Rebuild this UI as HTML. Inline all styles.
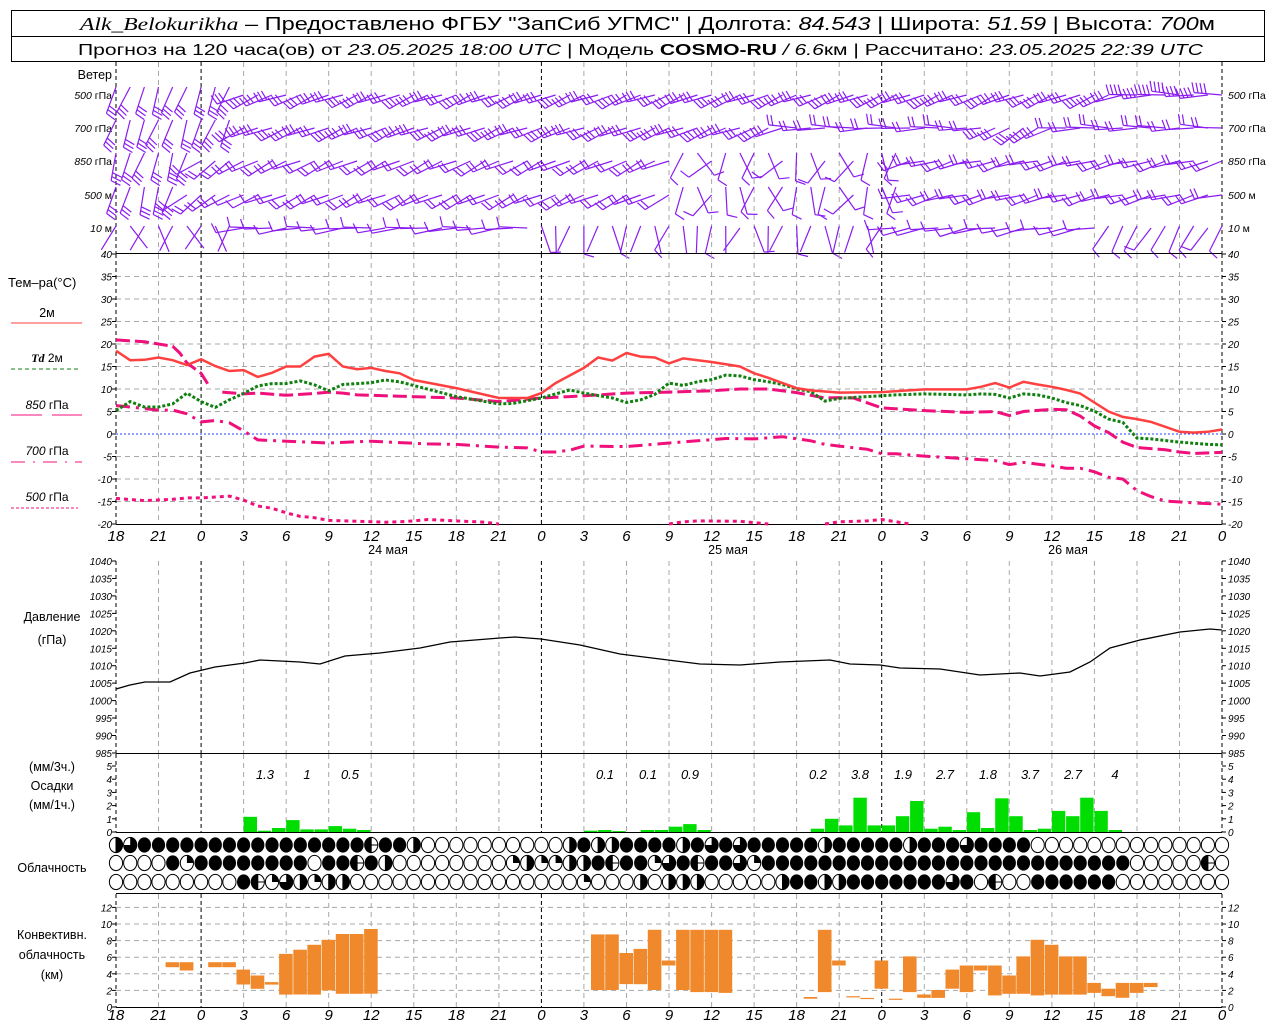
<!DOCTYPE html>
<html><head><meta charset="utf-8">
<style>
html,body{margin:0;padding:0;background:#fff;width:1280px;height:1024px;overflow:hidden}
svg{display:block}
text{font-family:"Liberation Sans",sans-serif;fill:#000}
.it{font-style:italic}
.sr{font-family:"Liberation Serif",serif;font-style:italic}
.ax{font-size:10px;font-style:italic}
.hr{font-size:15px;font-style:italic}
.lb{font-size:12.5px}
</style></head><body>
<svg id="s" width="1280" height="1024" xmlns="http://www.w3.org/2000/svg">
<rect x="11.5" y="10.5" width="1253" height="51" fill="none" stroke="#000"/>
<line x1="11" y1="36.5" x2="1265" y2="36.5" stroke="#000"/>
<text x="80" y="30" font-size="18" textLength="1135" lengthAdjust="spacingAndGlyphs"><tspan class="sr">Alk_Belokurikha</tspan> – Предоставлено ФГБУ "ЗапСиб УГМС" | Долгота: <tspan class="it">84.543</tspan> | Широта: <tspan class="it">51.59</tspan> | Высота: <tspan class="it">700</tspan>м</text>
<text x="78" y="55" font-size="16" textLength="1125" lengthAdjust="spacingAndGlyphs">Прогноз на 120 часа(ов) от <tspan class="it">23.05.2025 18:00 UTC</tspan>  | Модель <tspan font-weight="bold">COSMO-RU</tspan><tspan class="it"> / 6.6</tspan>км | Рассчитано: <tspan class="it">23.05.2025 22:39 UTC</tspan></text>
<g id="g"></g>
</svg>
<script>
var NS="http://www.w3.org/2000/svg",G=document.getElementById("g"),out="";
function X(h){return 116+h*14.18}
function add(s){out+=s}
function line(x1,y1,x2,y2,st){add('<line x1="'+x1.toFixed(1)+'" y1="'+y1.toFixed(1)+'" x2="'+x2.toFixed(1)+'" y2="'+y2.toFixed(1)+'" '+st+'/>')}
function txt(x,y,t,cls,anc){add('<text x="'+x+'" y="'+y+'" class="'+(cls||'')+'" text-anchor="'+(anc||'start')+'">'+t+'</text>')}
var GRAY='stroke="#a8a8a8" stroke-width="1" stroke-dasharray="5,4"';
var BLK='stroke="#000" stroke-width="1" stroke-dasharray="4,3"';
function vgrid(y1,y2){for(var h=0;h<=78;h+=3){var day=(h%24==6)||h==0||h==78;line(X(h),y1,X(h),y2,day?BLK:GRAY)}}
// panels
// wind
vgrid(62,253);
txt(112,79,"Ветер","lb","end");
var wl=["500 гПа","700 гПа","850 гПа","500  м","10   м"],wy=[95,128,161,195,228];
for(var i=0;i<5;i++){add('<text x="112" y="'+(wy[i]+4)+'" font-size="10.5" text-anchor="end"><tspan class="it">'+wl[i].split(" ")[0]+'</tspan> '+wl[i].split(" ").slice(1).join(" ").trim()+'</text>');
add('<text x="1228" y="'+(wy[i]+4)+'" font-size="10.5"><tspan class="it">'+wl[i].split(" ")[0]+'</tspan> '+wl[i].split(" ").slice(1).join(" ").trim()+'</text>');}
// barbs
function wind(r,h){var a,n;var j=Math.sin(h*1.7+r*2.3)*8;
 if(r==0){if(h<9){a=110;n=3}else if(h<72){a=158;n=3}else{a=180;n=4}}
 else if(r==1){if(h<9){a=110;n=3}else if(h<48){a=158;n=3}else if(h>=62&&h<67){a=150;n=3}else{a=180;n=2}}
 else if(r==2){if(h<6){a=108;n=3}else if(h<10){a=145;n=2}else if(h<40){a=155;n=2}else if(h<56){a=[120,60,140,100,70][h%5];n=1}else{a=165;n=2}}
 else if(r==3){if(h<5){a=105;n=3}else if(h<9){a=145;n=2}else if(h<12){a=160;n=1}else if(h<40){a=155;n=2}else if(h<56){a=[110,60,130,95,75][h%5];n=1}else{a=165;n=2}}
 else{if(h<9){a=(h%2?60:120);n=0}else if(h<30){a=175;n=1}else if(h<55){a=[75,95,110,85,120][h%5];n=(h%3==0)?1:0}else if(h<70){a=170;n=1}else{a=120;n=1}}
 return [a+j,n]}
var wc='stroke="#8a1cf0" stroke-width="1.2"';
for(var r=0;r<5;r++){for(var h=0;h<=78;h++){var w=wind(r,h),a=w[0]*Math.PI/180,n=w[1];
 var ux=Math.cos(a),uy=Math.sin(a);var sx=X(h),sy=wy[r]+(w[0]<=125?-8:0);
 if(r==4&&w[0]<=125){sy=wy[r]-2}
 var L=28,tx=sx+ux*L,ty=sy+uy*L;line(sx,sy,tx,ty,wc);
 var px,py;if(w[0]<=125){px=Math.sin(a);py=-Math.cos(a)}else{px=-Math.sin(a);py=Math.cos(a)}
 for(var k=0;k<n;k++){var bx=tx-ux*k*4,by=ty-uy*k*4;line(bx,by,bx+px*10+ux*3,by+py*10+uy*3,wc)}}}
// temp panel
line(116,253.5,1222,253.5,'stroke="#000"');line(116,524.5,1222,524.5,'stroke="#000"');
function TY(t){return 434-t*4.5}
for(var t=35;t>=-15;t-=5){if(t!=0)line(116,TY(t),1222,TY(t),GRAY)}
vgrid(254,524);
line(116,434,1222,434,'stroke="#2040ff" stroke-width="1" stroke-dasharray="2,2"');
for(var t=40;t>=-20;t-=5){txt(112,TY(t)+4,t,"ax","end");txt(1228,TY(t)+4,t,"ax");line(112,TY(t),116,TY(t),'stroke="#000"');line(1222,TY(t),1226,TY(t),'stroke="#000"')}
function poly(pts,st,fy){var s=pts.map(function(p){return X(p[0]).toFixed(1)+","+fy(p[1]).toFixed(1)}).join(" ");add('<polyline fill="none" points="'+s+'" '+st+'/>')}
var red=[[0,18.5],[1,16.4],[2,16.5],[3,17],[4,16.4],[5,15.3],[6,16.6],[7,15.1],[8,14],[9,14.2],[10,12.7],[11,13.6],[12,15],[13,15],[14,17.2],[15,17.8],[16,15],[17,14.4],[18,14.7],[19,14],[20,13.5],[21,12],[24,10.2],[27,8],[29,8],[30,9.1],[31,11.3],[33,14.7],[34,17],[35,16.3],[36,18],[37,17.2],[38,17],[39,15.7],[40,16.8],[42,16],[44,15],[45,13.5],[46,12.5],[47,11.3],[48,10.2],[49,9.7],[51,9.2],[54,9.3],[57,9.9],[60,9.9],[61,10.5],[62,11.3],[63,10.3],[64,11.6],[65,11],[66,10.5],[67,9.8],[68,9],[69,7],[70,5],[71,3.8],[72,3.3],[73,2.7],[74,1.6],[75,0.5],[76,0.3],[77,0.5],[78,1]];
var grn=[[0,5.2],[1,7.2],[2,6],[3,6],[4,6.7],[5,9.1],[6,7.2],[7,5.9],[8,7.6],[9,9],[10,10.7],[11,11.2],[12,11.2],[13,11.8],[14,10.9],[15,9.6],[16,11],[17,11.2],[18,11.4],[19,12],[20,11.6],[24,8.3],[27,6.7],[28,6.8],[30,8],[32,9.8],[33,9.1],[35,8],[36,7],[37,7.6],[38,8.8],[39,11.3],[40,10.8],[41,11.6],[42,12.1],[43,13.1],[44,12.9],[45,12.1],[46,11.6],[47,11],[48,10],[49,9.4],[50,7.3],[51,7.9],[53,8.3],[55,8.7],[57,8.9],[60,8.7],[61,8.9],[62,8.8],[63,8],[64,8.9],[65,8.7],[66,8],[67,7],[68,6.3],[69,5.1],[70,3.3],[71,2.6],[72,-0.9],[73,-1.1],[75,-1.8],[77,-2.3],[78,-2.4]];
var p850a=[[0,20.9],[2,20.5],[3,20],[4,19.5],[4.5,18],[5,15.8],[6,13.5],[6.6,10.5]];
var p850b=[[7.5,9.3],[9,8.9],[10,9.1],[12,8.6],[14,9],[15,9.3],[16,9.1],[17,8.7],[20,8.4],[24,8],[27,7.2],[30,8],[32,8.3],[34,8.7],[36,9.1],[39,9.3],[42,9.6],[44,10],[46,10],[48,9.2],[49,8.6],[50,8],[51,8.1],[52,8],[54,5.8],[57,5.2],[60,4.8],[62,5],[63,4.1],[64,5],[66,5.5],[67,5.4],[68,4],[69,1.8],[70,0.3],[71,-1.8],[72,-3],[74,-3.5],[75,-4],[76,-4.3],[78,-4.1]];
var p700=[[0,6.3],[1,6],[3,5.3],[4,5.3],[5,4.5],[6,2.7],[7,3],[8,2.5],[9,0.7],[10,-1.3],[12,-1.6],[15,-2],[18,-1.6],[20,-1.9],[22,-2.2],[24,-2.3],[27,-2.9],[29,-3.1],[30,-4],[31,-4],[32,-3.6],[33,-2.7],[36,-2.8],[39,-2],[41,-1.5],[43,-1],[45,-1.1],[47,-0.6],[49,-1.5],[50,-2.3],[51,-2.7],[53,-3.4],[54,-4.4],[55,-4.4],[57,-4.9],[60,-5.5],[62,-5.9],[63,-6.8],[64,-6.3],[66,-7.1],[67,-7.6],[68,-7.6],[69,-8.4],[70,-9.6],[71,-10],[72,-12.6],[73,-13.9],[74,-14.9],[76,-15.3],[78,-15.6]];
var p500=[[[0,-14.3],[2,-14.8],[4,-14.5],[5,-14.2],[6,-14.2],[8,-13.8],[9,-14.7],[10,-16],[11,-16.5],[12,-17.5],[13,-18.3],[14,-18.6],[15,-19.2],[17,-19.4],[19,-19.6],[20,-19.5],[21,-19.3],[22,-19],[24,-19.3],[26,-19.6],[27,-20]],[[39,-20],[40,-19.5],[41,-19.3],[44,-19.4],[46,-20]],[[50,-20],[51,-19.5],[53,-19.3],[54,-19],[55,-19.5],[56,-20]]];
var MG="#f0107c";
poly(p850a,'stroke="'+MG+'" stroke-width="3" stroke-dasharray="14,5"',TY);
poly(p850b,'stroke="'+MG+'" stroke-width="3" stroke-dasharray="14,5"',TY);
poly(p700,'stroke="'+MG+'" stroke-width="3" stroke-dasharray="14,6,3,6"',TY);
p500.forEach(function(s){poly(s,'stroke="'+MG+'" stroke-width="3" stroke-dasharray="4,4"',TY)});
poly(grn,'stroke="#108010" stroke-width="3" stroke-dasharray="3,2"',TY);
poly(red,'stroke="#ff4040" stroke-width="2.5"',TY);
// legend
add('<text x="8" y="287" font-size="13">Тем–ра(°C)</text>');
txt(47,317,"2м","lb","middle");line(11,323,82,323,'stroke="#ff4040" stroke-width="1"');
add('<text x="47" y="362" font-size="12" text-anchor="middle"><tspan class="sr" font-weight="bold">Td</tspan>  2м</text>');line(11,369,80,369,'stroke="#108010" stroke-dasharray="4,3"');
add('<text x="47" y="409" font-size="12" text-anchor="middle"><tspan class="it">850</tspan> гПа</text>');line(11,415,42,415,'stroke="'+MG+'"');line(52,415,82,415,'stroke="'+MG+'"');
add('<text x="47" y="455" font-size="12" text-anchor="middle"><tspan class="it">700</tspan> гПа</text>');line(11,462,82,462,'stroke="'+MG+'" stroke-dasharray="14,8,2,8"');
add('<text x="47" y="501" font-size="12" text-anchor="middle"><tspan class="it">500</tspan> гПа</text>');line(11,508,78,508,'stroke="'+MG+'" stroke-dasharray="3,2"');
// hour labels
var hl=[18,21,0,3,6,9,12,15,18,21,0,3,6,9,12,15,18,21,0,3,6,9,12,15,18,21,0];
for(var i=0;i<27;i++){txt(X(i*3),541,hl[i],"hr","middle");txt(X(i*3),1020,hl[i],"hr","middle")}
txt(388,554,"24 мая","lb","middle");txt(728,554,"25 мая","lb","middle");txt(1068,554,"26 мая","lb","middle");
// pressure
function PY(p){return 561+(1040-p)*3.49}
vgrid(561,753);line(116,753.5,1222,753.5,'stroke="#000"');
for(var p=1040;p>=985;p-=5){txt(112,PY(p)+4,p,"ax","end");txt(1228,PY(p)+4,p,"ax");line(112,PY(p),116,PY(p),'stroke="#000"');line(1222,PY(p),1226,PY(p),'stroke="#000"')}
txt(52,621,"Давление","lb","middle");txt(52,644,"(гПа)","lb","middle");
var pr=[[116,689],[130,685],[145,682],[170,682],[190,673],[215,667],[245,663],[260,660],[300,662],[320,664],[345,656],[380,653],[420,648],[450,642],[500,638],[515,637],[541,639],[580,645],[620,654],[660,659],[700,664],[740,665],[780,662],[830,660],[850,664],[880,665],[900,668],[940,669],[980,675],[1020,673],[1040,676],[1070,672],[1090,662],[1110,648],[1140,640],[1180,632],[1210,629],[1222,630]];
add('<polyline fill="none" stroke="#000" stroke-width="1.3" points="'+pr.map(function(q){return q.join(",")}).join(" ")+'"/>');
// precip
vgrid(754,832);line(116,832.5,1222,832.5,'stroke="#000"');
for(var m=0;m<=5;m++){var y=832-m*13.2;txt(112,y+4,m,"ax","end");txt(1228,y+4,m,"ax");line(112,y,116,y,'stroke="#000"');line(1222,y,1226,y,'stroke="#000"')}
txt(52,771,"(мм/3ч.)","lb","middle");txt(52,790,"Осадки","lb","middle");txt(52,809,"(мм/1ч.)","lb","middle");
var pc={9:1.15,10:0.1,11:0.3,12:0.9,13:0.2,14:0.2,15:0.45,16:0.25,17:0.15,33:0.1,34:0.15,35:0.07,37:0.15,38:0.15,39:0.4,40:0.6,41:0.15,49:0.25,50:1.0,51:0.5,52:2.6,53:0.5,54:0.5,55:1.2,56:2.35,57:0.25,58:0.4,59:0.15,60:1.5,61:0.3,62:2.55,63:1.2,64:0.15,65:0.25,66:1.6,67:1.2,68:2.6,69:1.6,70:0.15};
for(var k in pc){var hh=+k,v=pc[k]*13.2;add('<rect x="'+X(hh).toFixed(1)+'" y="'+(832-v).toFixed(1)+'" width="13.4" height="'+v.toFixed(1)+'" fill="#00dd00"/>')}
var pl=[[265,"1.3"],[307,"1"],[350,"0.5"],[605,"0.1"],[648,"0.1"],[690,"0.9"],[818,"0.2"],[860,"3.8"],[903,"1.9"],[945,"2.7"],[988,"1.8"],[1030,"3.7"],[1073,"2.7"],[1115,"4"]];
pl.forEach(function(q){add('<text x="'+q[0]+'" y="779" font-size="13" class="it" text-anchor="middle">'+q[1]+'</text>')});
// clouds
function pad(s){while(s.length<79)s+="0";return s.slice(0,79)}
var r1=pad("23"+"4".repeat(16)+"H442"+"0".repeat(10)+"242244442434344444244444244434444");
var r2=pad("00004144444444044H42"+"0".repeat(8)+"1211224H44134H4431"+"4".repeat(26)+"00000H");
var r3=pad("000000000"+"4H132122"+"0".repeat(16)+"1000202220000024422444444434"+"0H00444444");
var cy=[845,863,882];
[r1,r2,r3].forEach(function(s,ri){for(var i=0;i<79;i++){var cx=X(i),c=cy[ri],rx=6.6,ry=7.6,ch=s[i];
 if(ch=="4")add('<ellipse cx="'+cx.toFixed(1)+'" cy="'+c+'" rx="'+rx+'" ry="'+ry+'" fill="#000"/>');
 else{add('<ellipse cx="'+cx.toFixed(1)+'" cy="'+c+'" rx="'+rx+'" ry="'+ry+'" fill="#fff" stroke="#000" stroke-width="1"/>');
  var C=cx.toFixed(1);
  if(ch=="1")add('<path d="M'+C+','+c+' L'+C+','+(c-ry)+' A'+rx+','+ry+' 0 0 1 '+(cx+rx).toFixed(1)+','+c+' Z"/>');
  if(ch=="2")add('<path d="M'+C+','+(c-ry)+' A'+rx+','+ry+' 0 0 1 '+C+','+(c+ry)+' Z"/>');
  if(ch=="3")add('<path d="M'+C+','+c+' L'+C+','+(c-ry)+' A'+rx+','+ry+' 0 1 1 '+(cx-rx).toFixed(1)+','+c+' Z"/>');
  if(ch=="H"){add('<path d="M'+C+','+(c-ry)+' A'+rx+','+ry+' 0 0 0 '+C+','+(c+ry)+' Z"/>');line(cx-rx,c,cx+rx,c,'stroke="#000"');line(cx,c-ry,cx,c+ry,'stroke="#000"')}
  if(ch=="2")line(cx,c-ry,cx,c+ry,'stroke="#000"');
 }}});
txt(52,872,"Облачность","lb","middle");
// convective
function CY(k){return 1007-k*8.3}
line(116,893.5,1222,893.5,'stroke="#000"');line(116,1007.5,1222,1007.5,'stroke="#000"');
for(var k=2;k<=12;k+=2)line(116,CY(k),1222,CY(k),GRAY);
vgrid(894,1007);
for(var k=0;k<=12;k+=2){txt(112,CY(k)+4,k,"ax","end");txt(1228,CY(k)+4,k,"ax");line(112,CY(k),116,CY(k),'stroke="#000"');line(1222,CY(k),1226,CY(k),'stroke="#000"')}
txt(52,939,"Конвективн.","lb","middle");txt(52,959,"облачность","lb","middle");txt(52,979,"(км)","lb","middle");
var cb=[[3.5,5.4,4.8],[4.5,5.4,4.4],[6.5,5.4,4.8],[7.5,5.4,4.8],[8.5,4.5,2.7],[9.5,3.8,2.2],[10.5,3.0,2.7],[11.5,6.4,1.5],[12.5,6.9,1.5],[13.5,7.5,1.5],[14.5,8.1,2.0],[15.5,8.8,1.6],[16.5,8.8,1.6],[17.5,9.4,1.6],
[33.5,8.75,2.05],[34.5,8.75,2.05],[35.5,6.5,2.75],[36.5,7.0,2.75],[37.5,9.3,2.05],[38.5,5.6,5.0],[39.5,9.3,2.05],[40.5,9.3,1.8],[41.5,9.3,1.8],[42.5,9.3,1.7],
[48.5,1.2,1.0],[49.5,9.3,1.8],[50.5,5.6,5.0],[51.5,1.3,1.15],[52.5,1.1,0.95],[53.5,5.6,2.2],[54.5,1.0,0.85],[55.5,6.1,1.8],[56.5,1.5,1.1],[57.5,2.05,1.1],[58.5,4.5,2.2],[59.5,5.0,1.8],[60.5,5.0,4.4],[61.5,5.0,1.4],[62.5,3.8,1.6],[63.5,6.1,1.6],[64.5,8.1,1.4],[65.5,7.5,1.5],[66.5,6.1,1.5],[67.5,6.1,1.5],[68.5,2.9,1.7],[69.5,2.2,1.3],[70.5,2.9,1.1],[71.5,2.9,1.7],[72.5,2.9,2.4]];
cb.forEach(function(b){var y1=CY(b[1]),y2=CY(b[2]);add('<rect x="'+X(b[0]).toFixed(1)+'" y="'+y1.toFixed(1)+'" width="13.6" height="'+(y2-y1).toFixed(1)+'" fill="#f0882c"/>')});
G.innerHTML=out;
</script>
</body></html>
